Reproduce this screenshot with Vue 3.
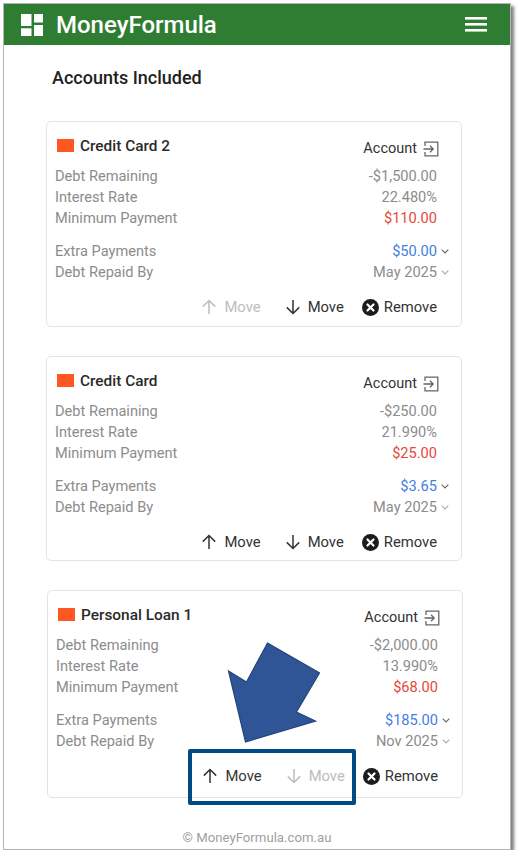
<script setup>
const accounts = [
  {
    id: 1, name: 'Credit Card 2', balance: '-$1,500.00', rate: '22.480%', minimum: '$110.00',
    extra: '$50.00', repaid: 'May 2025', canUp: false, canDown: true,
  },
  {
    id: 2, name: 'Credit Card', balance: '-$250.00', rate: '21.990%', minimum: '$25.00',
    extra: '$3.65', repaid: 'May 2025', canUp: true, canDown: true,
  },
  {
    id: 3, name: 'Personal Loan 1', balance: '-$2,000.00', rate: '13.990%', minimum: '$68.00',
    extra: '$185.00', repaid: 'Nov 2025', canUp: true, canDown: false,
  },
];
</script>

<template>
  <div class="frame">
    <header class="topbar">
      <div class="brand">
        <svg class="logo" width="22" height="22" viewBox="0 0 22 22" fill="#fff">
          <rect x="0" y="0" width="10.5" height="12" />
          <rect x="13" y="0" width="9" height="8.5" />
          <rect x="0" y="14.3" width="10.5" height="7.7" />
          <rect x="13" y="11" width="9" height="11" />
        </svg>
        <span>MoneyFormula</span>
      </div>
      <svg class="burger" width="22" height="15" viewBox="0 0 22 15" fill="#fff">
        <rect y="0" width="22" height="2.6" />
        <rect y="6" width="22" height="2.6" />
        <rect y="12" width="22" height="2.6" />
      </svg>
    </header>

    <main class="content">
      <h1>Accounts Included</h1>

      <section v-for="acc in accounts" :key="acc.id" class="card">
        <div class="card-head">
          <div class="card-title">
            <span class="swatch"></span>
            <h2>{{ acc.name }}</h2>
          </div>
          <div class="account-link">
            Account
            <svg width="16" height="16" viewBox="0 0 16 16" fill="none" stroke="#666" stroke-width="1.3">
              <path d="M2 5V1.2h12.8v13.6H2V11" />
              <path d="M0.5 8h9.5M7 4.8 10.2 8 7 11.2" />
            </svg>
          </div>
        </div>

        <div class="rows">
          <div class="row"><span>Debt Remaining</span><span>{{ acc.balance }}</span></div>
          <div class="row"><span>Interest Rate</span><span>{{ acc.rate }}</span></div>
          <div class="row"><span>Minimum Payment</span><span class="red">{{ acc.minimum }}</span></div>
        </div>

        <div class="rows second">
          <div class="row">
            <span>Extra Payments</span>
            <span class="blue">{{ acc.extra }}</span>
            <svg class="chev" width="8" height="5" viewBox="0 0 8 5" fill="none" stroke="#666" stroke-width="1.1">
              <path d="M.7.7 4 4 7.3.7" />
            </svg>
          </div>
          <div class="row">
            <span>Debt Repaid By</span>
            <span>{{ acc.repaid }}</span>
            <svg class="chev" width="8" height="5" viewBox="0 0 8 5" fill="none" stroke="#aaa" stroke-width="1.1">
              <path d="M.7.7 4 4 7.3.7" />
            </svg>
          </div>
        </div>

        <div class="actions">
          <button class="action" :class="{ off: !acc.canUp }">
            <svg width="16" height="16" viewBox="0 0 16 16" fill="none" stroke="currentColor" stroke-width="1.5">
              <path d="M8 15V1.5M1.8 7.6 8 1.5l6.2 6.1" />
            </svg>
            Move
          </button>
          <button class="action" :class="{ off: !acc.canDown }">
            <svg width="16" height="16" viewBox="0 0 16 16" fill="none" stroke="currentColor" stroke-width="1.5">
              <path d="M8 1v13.5M1.8 8.4 8 14.5l6.2-6.1" />
            </svg>
            Move
          </button>
          <button class="action remove">
            <svg width="17" height="17" viewBox="0 0 17 17">
              <circle cx="8.5" cy="8.5" r="8.5" fill="#1c1c1c" />
              <path d="M5.5 5.5l6 6M11.5 5.5l-6 6" stroke="#fff" stroke-width="2.2" stroke-linecap="round" />
            </svg>
            Remove
          </button>
        </div>
      </section>

      <footer class="copyright">© MoneyFormula.com.au</footer>
    </main>

    <!-- annotation over the screenshot -->
    <div class="highlight"></div>
    <svg class="pointer" width="96" height="104" viewBox="0 0 96 104">
      <polygon points="43.5,1 95.5,31 72.5,70 91.5,79 21.5,100 4.5,29 22.5,40" fill="#2f5597" stroke="#24447a" stroke-width="1.2" />
    </svg>
  </div>
</template>

<style scoped>
.frame {
  position: relative;
  box-sizing: border-box;
  width: 508px;
  height: 847px;
  margin: 3px 0 0 3px;
  background: #fff;
  border: 1px solid #b5b5b5;
  box-shadow: 3px 3px 3px rgba(0, 0, 0, 0.5);
  font-family: Roboto, "Liberation Sans", sans-serif;
  color: #222;
}

/* TOPBAR */
.topbar {
  height: 41px;
  background: #2e7d32;
  display: flex;
  align-items: center;
  justify-content: space-between;
  padding: 0 23px 0 17px;
  color: #fff;
}

.brand {
  display: flex;
  align-items: center;
  gap: 13px;
  font-size: 24px;
  font-weight: 500;
}

.logo,
.burger {
  display: block;
}

/* CONTENT */
.content {
  padding: 0 48px 0 42px;
}

h1 {
  margin: 0;
  padding: 21px 0 0 6px;
  height: 54px;
  box-sizing: border-box;
  line-height: 23px;
  font-size: 18px;
  font-weight: 500;
  color: #212121;
}

.card {
  box-sizing: border-box;
  height: 206px;
  margin-top: 22px;
  padding: 13px 24px 0 8px;
  background: #fff;
  border: 1px solid #e4e4e4;
  border-radius: 5px;
}

.card + .card {
  margin-top: 29px;
}

/* the last two cards drift a little in the original capture */
.card:nth-of-type(2) {
  height: 205px;
}

.card:nth-of-type(3) {
  height: 208px;
  margin-left: 1px;
  margin-right: -1px;
}

.card-head {
  display: flex;
  justify-content: space-between;
  align-items: center;
  height: 21px;
}

.card-title {
  display: flex;
  align-items: center;
  gap: 6px;
  padding-left: 2px;
}

.swatch {
  width: 17px;
  height: 13px;
  background: #ff5722;
}

h2 {
  margin: 0;
  font-size: 15.4px;
  font-weight: 500;
  color: #2a2a2a;
}

.account-link {
  display: flex;
  align-items: center;
  gap: 6px;
  margin-top: 6px;
  margin-right: -2px;
  font-size: 14.5px;
  color: #333;
}

.rows {
  margin-top: 10px;
}

.rows.second {
  margin-top: 12px;
}

.row {
  position: relative;
  display: flex;
  justify-content: space-between;
  height: 21px;
  line-height: 21px;
  font-size: 14.6px;
  color: #8c8c8c;
}

.red {
  color: #e5483a;
}

.blue {
  color: #3f7fe0;
}

.chev {
  position: absolute;
  right: -12px;
  top: 8px;
}

/* ACTIONS */
.actions {
  display: flex;
  justify-content: flex-end;
  gap: 24px;
  margin-top: 15px;
}

.action {
  display: flex;
  align-items: center;
  gap: 7px;
  padding: 0;
  border: none;
  background: none;
  font: inherit;
  font-size: 14.8px;
  color: #333;
}

.action.remove {
  gap: 5px;
  margin-left: -6px;
}

.action.off {
  color: #bdbdbd;
}

.copyright {
  margin-top: 32px;
  padding-left: 6px;
  text-align: center;
  font-size: 13.2px;
  color: #a0a0a0;
}

/* ANNOTATION */
.highlight {
  position: absolute;
  left: 184px;
  top: 745px;
  width: 168px;
  height: 56px;
  box-sizing: border-box;
  border: 4px solid #004a85;
  border-radius: 2px;
}

.pointer {
  position: absolute;
  left: 220px;
  top: 638px;
}
</style>

<style>
html,
body {
  background: #fff;
}
</style>
